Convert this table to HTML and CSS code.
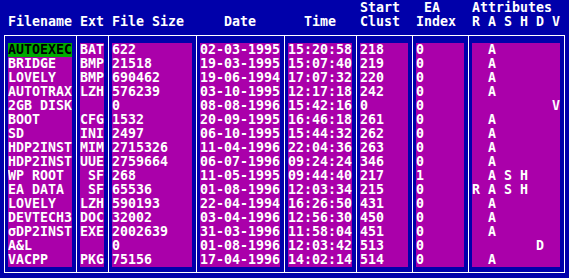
FILE: index.html
```html
<!DOCTYPE html>
<html>
<head>
<meta charset="utf-8">
<link rel="stylesheet" href="styles.css">
</head>
<body>
<div class="header">
  <div class="col c1"><div class="hl"></div><div class="hl">Filename</div></div>
  <div class="col c2"><div class="hl"></div><div class="hl">Ext</div></div>
  <div class="col c3"><div class="hl"></div><div class="hl">File Size</div></div>
  <div class="col c4"><div class="hl"></div><div class="hl center">Date</div></div>
  <div class="col c5"><div class="hl"></div><div class="hl center">Time</div></div>
  <div class="col c6"><div class="hl">Start</div><div class="hl">Clust</div></div>
  <div class="col c7"><div class="hl"> EA</div><div class="hl">Index</div></div>
  <div class="col c8"><div class="hl">Attributes</div><div class="hl">R A S H D V</div></div>
</div>
<div class="frame">
  <div class="col c1"><div class="cells">
    <div class="sel">AUTOEXEC</div><div>BRIDGE</div><div>LOVELY</div><div>AUTOTRAX</div><div>2GB DISK</div><div>BOOT</div><div>SD</div><div>HDP2INST</div><div>HDP2INST</div><div>WP ROOT</div><div>EA DATA</div><div>LOVELY</div><div>DEVTECH3</div><div>σDP2INST</div><div>A&amp;L</div><div>VACPP</div>
  </div></div>
  <div class="col c2"><div class="cells">
    <div>BAT</div><div>BMP</div><div>BMP</div><div>LZH</div><div></div><div>CFG</div><div>INI</div><div>MIM</div><div>UUE</div><div> SF</div><div> SF</div><div>LZH</div><div>DOC</div><div>EXE</div><div></div><div>PKG</div>
  </div></div>
  <div class="col c3"><div class="cells">
    <div>622</div><div>21518</div><div>690462</div><div>576239</div><div>0</div><div>1532</div><div>2497</div><div>2715326</div><div>2759664</div><div>268</div><div>65536</div><div>590193</div><div>32002</div><div>2002639</div><div>0</div><div>75156</div>
  </div></div>
  <div class="col c4"><div class="cells">
    <div>02-03-1995</div><div>19-03-1995</div><div>19-06-1994</div><div>03-10-1995</div><div>08-08-1996</div><div>20-09-1995</div><div>06-10-1995</div><div>11-04-1996</div><div>06-07-1996</div><div>11-05-1995</div><div>01-08-1996</div><div>22-04-1994</div><div>03-04-1996</div><div>31-03-1996</div><div>01-08-1996</div><div>17-04-1996</div>
  </div></div>
  <div class="col c5"><div class="cells">
    <div>15:20:58</div><div>15:07:40</div><div>17:07:32</div><div>12:17:18</div><div>15:42:16</div><div>16:46:18</div><div>15:44:32</div><div>22:04:36</div><div>09:24:24</div><div>09:44:40</div><div>12:03:34</div><div>16:26:50</div><div>12:56:30</div><div>11:58:04</div><div>12:03:42</div><div>14:02:14</div>
  </div></div>
  <div class="col c6"><div class="cells">
    <div>218</div><div>219</div><div>220</div><div>242</div><div>0</div><div>261</div><div>262</div><div>263</div><div>346</div><div>217</div><div>215</div><div>431</div><div>450</div><div>451</div><div>513</div><div>514</div>
  </div></div>
  <div class="col c7"><div class="cells">
    <div>0</div><div>0</div><div>0</div><div>0</div><div>0</div><div>0</div><div>0</div><div>0</div><div>0</div><div>1</div><div>0</div><div>0</div><div>0</div><div>0</div><div>0</div><div>0</div>
  </div></div>
  <div class="col c8"><div class="cells">
    <div>  A</div><div>  A</div><div>  A</div><div>  A</div><div>          V</div><div>  A</div><div>  A</div><div>  A</div><div>  A</div><div>  A S H</div><div>R A S H</div><div>  A</div><div>  A</div><div>  A</div><div>        D</div><div>  A</div>
  </div></div>
</div>
</body>
</html>
```
FILE: styles.css
```css
html, body {
  margin: 0;
  padding: 0;
  background: #0000aa;
}
body {
  padding-top: 1px;
  font-family: "DejaVu Sans Mono", monospace;
  font-weight: bold;
  font-size: 13.29px;
  line-height: 14px;
  color: #ffffff;
  width: 569px;
  height: 277px;
  overflow: hidden;
}
.header {
  display: flex;
  margin-left: 5px;
  height: 28px;
}
.header .col {
  border-right: 1px solid transparent;
}
.hl {
  height: 14px;
  white-space: pre;
}
.center {
  text-align: center;
}
.frame {
  display: flex;
  margin-top: 6px;
  margin-left: 4px;
  width: 559px;
  border: 1px solid #ffffff;
}
.col {
  padding-left: 3px;
  padding-right: 4px;
  flex: none;
}
.frame .col {
  padding-top: 7px;
  padding-bottom: 5px;
  border-right: 1px solid #ffffff;
}
.frame .col.c8,
.header .col.c8 {
  border-right: none;
}
.c1 .cells, .c1 .hl { width: 64px; }
.c2 .cells, .c2 .hl { width: 24px; }
.c3 .cells, .c3 .hl { width: 80px; }
.c4 .cells, .c4 .hl { width: 80px; }
.c5 .cells, .c5 .hl { width: 64px; }
.c6 .cells, .c6 .hl { width: 48px; }
.c7 .cells, .c7 .hl { width: 48px; }
.c8 .cells, .c8 .hl { width: 88px; }
.cells {
  background: #aa00aa;
}
.cells div {
  height: 14px;
  white-space: pre;
  overflow: hidden;
}
.cells .sel {
  background: #00aa00;
  color: #000000;
}
```
